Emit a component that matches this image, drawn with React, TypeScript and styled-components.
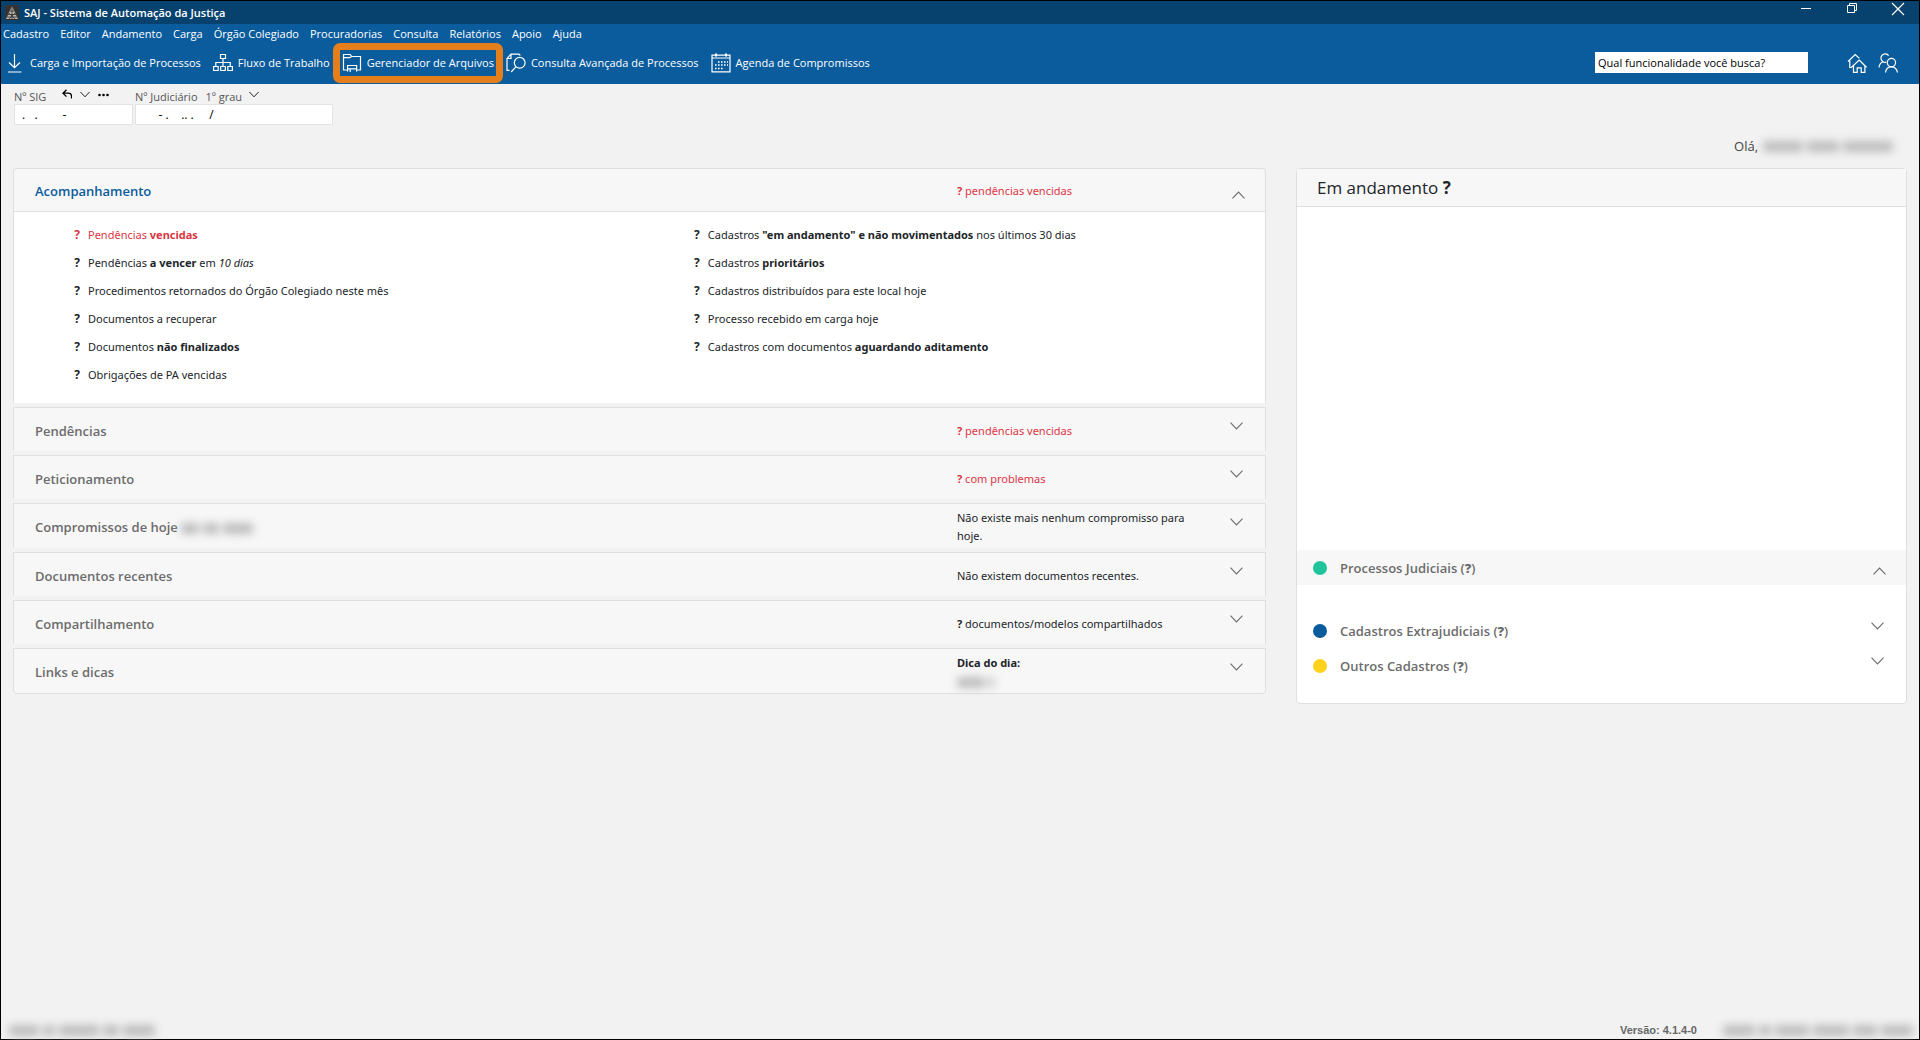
import React from 'react';
import styled, { createGlobalStyle, css } from 'styled-components';

const GlobalStyle = createGlobalStyle`
  *, *::before, *::after { box-sizing: border-box; }
  body { margin: 0; background: #f2f2f2; }
  button, input, select { font: inherit; color: inherit; }
  button { background: none; border: 0; padding: 0; cursor: pointer; text-align: left; }
  h1, h2, ul, p { margin: 0; padding: 0; }
  ul { list-style: none; }
`;

const Window = styled.div`
  display: flex;
  flex-direction: column;
  min-height: 100vh;
  border: 1px solid #000;
  background: #f2f2f2;
  color: #212529;
  font: 12px/18px 'Open Sans', 'Noto Sans', sans-serif;
`;

const TitleBar = styled.header`
  display: flex;
  align-items: center;
  justify-content: space-between;
  height: 23px;
  padding: 0 14px 0 4px;
  background: #07426f;
  color: #fff;
`;

const Brand = styled.div`
  display: flex;
  align-items: center;
  gap: 5px;
`;

const AppTitle = styled.h1`
  font-size: 11px;
  font-weight: 600;
  line-height: 18px;
`;

const WindowControls = styled.div`
  display: flex;
  gap: 32px;
  align-self: flex-start;
`;

const WindowButton = styled.button`
  display: flex;
  width: 14px;
  height: 16px;
  margin-top: 1px;
`;

const Ribbon = styled.div`
  background: #0a5c9d;
  color: #fff;
`;

const MenuBar = styled.nav`
  display: flex;
  gap: 11px;
  height: 20px;
  padding-left: 2px;
`;

const MenuItem = styled.button`
  font-size: 11px;
  line-height: 20px;
  white-space: nowrap;
`;

const ToolBar = styled.div`
  display: flex;
  align-items: center;
  justify-content: space-between;
  height: 40px;
  padding: 0 21px 3px 4px;
`;

const ToolGroup = styled.div<{ $gap: number }>`
  display: flex;
  align-items: center;
  gap: ${(p) => p.$gap}px;
`;

const Tool = styled.button<{ $highlighted?: boolean }>`
  position: relative;
  display: flex;
  align-items: center;
  gap: 5px;
  font-size: 11px;
  line-height: 18px;
  white-space: nowrap;

  ${(p) =>
    p.$highlighted &&
    css`
      &::after {
        content: '';
        position: absolute;
        inset: -10px -9px;
        border: 7px solid #e47f1c;
        border-radius: 7px;
      }
    `}
`;

const IconButton = styled.button`
  display: flex;
`;

const SearchBox = styled.input`
  width: 213px;
  height: 21px;
  margin-right: 28px;
  padding: 0 3px;
  border: 0;
  background: #fff;
  color: #000;
  font-size: 11px;
  &::placeholder { color: #000; opacity: 1; }
`;

const Lookup = styled.form`
  display: flex;
  gap: 2px;
  padding: 4px 13px 0;
`;

const LookupField = styled.div<{ $width: number }>`
  width: ${(p) => p.$width}px;
`;

const LookupHead = styled.div`
  display: flex;
  align-items: center;
  gap: 8px;
  height: 16px;
  padding-top: 2px;
  color: #555;
  font-size: 11px;
  white-space: nowrap;
`;

const HeadActions = styled.span`
  display: flex;
  align-items: center;
  gap: 8px;
  padding: 0 0 6px 8px;
  color: #000;
`;

const Court = styled.span`
  display: flex;
  align-items: center;
  gap: 6px;
  svg { margin-bottom: 6px; }
`;

const CourtSelect = styled.select`
  appearance: none;
  padding: 0;
  border: 0;
  background: none;
`;

const LookupInput = styled.input`
  width: 100%;
  height: 21px;
  padding: 0 7px;
  border: 1px solid #e3e3e3;
  background: #fff;
  color: #000;
  font-size: 12px;
`;

const Greeting = styled.p`
  display: flex;
  align-items: center;
  justify-content: flex-end;
  gap: 5px;
  height: 20px;
  margin: 11px 26px 12px;
  color: #444;
  font-size: 13px;
`;

const Redacted = styled.span`
  display: inline-flex;
  gap: 4px;
  filter: blur(4px);
  vertical-align: middle;
`;

const Word = styled.i<{ $width: number }>`
  width: ${(p) => p.$width}px;
  height: 11px;
  border-radius: 3px;
  background: #bdbdbd;
`;

const Board = styled.main`
  display: grid;
  grid-template-columns: 1253fr 611fr;
  align-items: start;
  gap: 30px;
  padding: 0 12px;
`;

const Accordion = styled.div`
  display: flex;
  flex-direction: column;
  gap: 4px;
`;

const Section = styled.section`
  border: 1px solid #dfdfdf;
  border-bottom: 0;
  background: #f7f7f7;
  &:first-child { border-radius: 4px 4px 0 0; }
  &:last-child { border-bottom: 1px solid #dfdfdf; border-radius: 0 0 4px 4px; }
`;

const SectionHead = styled.div<{ $open?: boolean }>`
  display: flex;
  align-items: center;
  min-height: 43px;
  padding: 5px 19px 3px 21px;
  ${(p) => p.$open && 'border-bottom: 1px solid #e2dfe0;'}
`;

const SectionTitle = styled.h2<{ $active?: boolean }>`
  flex: 1;
  color: ${(p) => (p.$active ? '#0a5c9d' : '#6c6c6c')};
  font-size: 13px;
  font-weight: 600;
  line-height: 20px;
`;

const Status = styled.div<{ $alert?: boolean }>`
  width: 274px;
  padding-right: 24px;
  color: ${(p) => (p.$alert ? '#dc3545' : '#212529')};
  font-family: 'Noto Sans', 'Open Sans', sans-serif;
  font-size: 11px;
`;

const Toggle = styled.button<{ $open?: boolean }>`
  display: flex;
  align-items: center;
  justify-content: center;
  align-self: ${(p) => (p.$open ? 'center' : 'flex-start')};
  width: 15px;
  height: 10px;
  margin: ${(p) => (p.$open ? '7px 0 0' : '8px 2px 0 -2px')};
  color: #6c6c6c;
`;

const SectionBody = styled.div`
  display: grid;
  grid-template-columns: 13fr 12fr;
  padding: 9px 0 14px 59px;
  background: #fff;
`;

const Indicator = styled.li<{ $alert?: boolean }>`
  display: flex;
  gap: 7px;
  color: ${(p) => (p.$alert ? '#dc3545' : '#212529')};
  font-family: 'Noto Sans', 'Open Sans', sans-serif;
  font-size: 11px;
  line-height: 28px;
`;

const Unknown = styled.b`
  width: 8px;
  font-size: 12px;
  font-weight: 700;
  text-align: center;
`;

const Card = styled.section`
  border: 1px solid #dfdfdf;
  border-radius: 4px;
  background: #fff;
`;

const CardTitle = styled.h2`
  padding: 0 20px;
  border-bottom: 1px solid #dfdfdf;
  background: #f7f7f7;
  font-size: 17px;
  font-weight: 400;
  line-height: 37px;
`;

const ChartArea = styled.div`
  height: 343px;
`;

const LegendRow = styled.div<{ $open?: boolean }>`
  display: flex;
  align-items: center;
  gap: 13px;
  height: 35px;
  margin-bottom: ${(p) => (p.$open ? '28px' : '0')};
  padding: 0 19px 0 16px;
  background: ${(p) => (p.$open ? '#f7f7f7' : 'transparent')};
`;

const Dot = styled.span<{ $color: string }>`
  width: 14px;
  height: 14px;
  border-radius: 50%;
  background: ${(p) => p.$color};
`;

const Legend = styled.div`
  padding-bottom: 20px;
`;

const StatusBar = styled.footer`
  display: flex;
  align-items: center;
  justify-content: space-between;
  height: 18px;
  margin-top: auto;
  padding: 0 6px 0 8px;
`;

const Release = styled.div`
  display: flex;
  align-items: center;
  gap: 26px;
  color: #666;
  font: bold 11px/16px 'Liberation Sans', Arial, sans-serif;
`;

const Chevron = ({ up, width = 13, color = 'currentColor' }: { up?: boolean; width?: number; color?: string }) => (
  <svg width={width} height={width === 13 ? 8 : 7} viewBox="0 0 13 8" fill="none" stroke={color} strokeWidth="1.1">
    <path d={up ? 'M.5 7.3 6.5 1l6 6.3' : 'M.5.7 6.5 7l6-6.3'} />
  </svg>
);

const Glyph = ({ children, size = 20 }: { children: React.ReactNode; size?: number }) => (
  <svg width={size} height={size} viewBox="0 0 20 20" fill="none" stroke="#fff" strokeWidth="1.2">
    {children}
  </svg>
);

const LogoMark = () => (
  <svg width="14" height="15" viewBox="0 0 14 15">
    <rect width="14" height="15" fill="#333" />
    <path d="M7 1 13 14H1Z" fill="#b9b4ae" />
    <path d="M7 1v13M4 8l6 6M10 8l-6 6M3 9.500h8M5 6h4M2 12h10" stroke="#333" strokeWidth=".8" />
  </svg>
);

const DownloadIcon = () => (
  <Glyph>
    <path d="M9.500 1v13.500M4 9.500l5.500 5.200L15 9.500M3 19h13.500" />
  </Glyph>
);

const FlowIcon = () => (
  <Glyph>
    <path d="M7.500 1.500h5v4h-5zM.600 13.500h4.600v4H.600zM7.700 13.500h4.600v4H7.700zM14.800 13.500h4.600v4h-4.600zM10 5.500v8M2.800 13.500v-4h14.400v4" />
  </Glyph>
);

const FolderIcon = () => (
  <Glyph>
    <path d="M5.500 17H1.500V1.500h6.800l1.400 2h8.800V17h-3.500M1.500 4.600h6.200l2-1.100" />
    <path d="M5.600 18.500v-6h9v6M5.600 15.800h9M8.200 19v-3.200" />
  </Glyph>
);

const AdvancedSearchIcon = () => (
  <Glyph>
    <path d="M3.500 17.400H1V5.500L5 1.200h7.500c1 0 1.500.6 1.500 1.600M1 5.500h4V1.200" />
    <circle cx="13.700" cy="9.800" r="5.400" />
    <path d="M9.800 13.800 5.200 19" />
  </Glyph>
);

const CalendarIcon = () => (
  <Glyph>
    <path d="M1 2.200h18v16.600H1zM1 5h18" />
    <path d="M5 .5v3M15 .5v3" strokeWidth="2" />
    <path d="M7 9h10M4 12h13M4 15.500h9" strokeWidth="1.600" strokeDasharray="1.600 1.400" />
  </Glyph>
);

const HomeIcon = () => (
  <Glyph>
    <path d="M1 8.500 8.200 1.600l4.200 3.800M2.800 7.500v7h2" />
    <path d="M4.500 14.200 12.200 7l7.300 7.200M6.500 12.800v6.600h3.700v-4.600h4v4.600h3.700v-6.600" />
  </Glyph>
);

const PeopleIcon = () => (
  <Glyph>
    <path d="M1 14.500c.3-3 1.500-4.800 4-5.800a4.200 4.200 0 1 1 5.600-6M5 8.700c1 .6 2 .7 3.200.5" />
    <circle cx="13.400" cy="9.600" r="4.200" />
    <path d="M7.500 19.500c.4-3.300 2.200-5.700 5.900-5.700s5.500 2.400 6.100 5.700" />
  </Glyph>
);

const menus = ['Cadastro', 'Editor', 'Andamento', 'Carga', 'Órgão Colegiado', 'Procuradorias', 'Consulta', 'Relatórios', 'Apoio', 'Ajuda'];

const tools = [
  { label: 'Carga e Importação de Processos', icon: <DownloadIcon /> },
  { label: 'Fluxo de Trabalho', icon: <FlowIcon /> },
  { label: 'Gerenciador de Arquivos', icon: <FolderIcon />, highlighted: true },
  { label: 'Consulta Avançada de Processos', icon: <AdvancedSearchIcon /> },
  { label: 'Agenda de Compromissos', icon: <CalendarIcon /> },
];

const leftIndicators = [
  { text: <>Pendências <b>vencidas</b></>, alert: true },
  { text: <>Pendências <b>a vencer</b> em <i>10 dias</i></> },
  { text: <>Procedimentos retornados do Órgão Colegiado neste mês</> },
  { text: <>Documentos a recuperar</> },
  { text: <>Documentos <b>não finalizados</b></> },
  { text: <>Obrigações de PA vencidas</> },
];

const rightIndicators = [
  { text: <>Cadastros <b>"em andamento" e não movimentados</b> nos últimos 30 dias</> },
  { text: <>Cadastros <b>prioritários</b></> },
  { text: <>Cadastros distribuídos para este local hoje</> },
  { text: <>Processo recebido em carga hoje</> },
  { text: <>Cadastros com documentos <b>aguardando aditamento</b></> },
];

const sections = [
  { title: 'Pendências', status: <><b>?</b> pendências vencidas</>, alert: true },
  { title: 'Peticionamento', status: <><b>?</b> com problemas</>, alert: true },
  { title: 'Compromissos de hoje', hidden: [18, 16, 30], status: <>Não existe mais nenhum compromisso para hoje.</> },
  { title: 'Documentos recentes', status: <>Não existem documentos recentes.</> },
  { title: 'Compartilhamento', status: <><b>?</b> documentos/modelos compartilhados</> },
  { title: 'Links e dicas', status: <><b>Dica do dia:</b><br /><Hidden words={[28, 5]} /></> },
];

const legend = [
  { title: 'Processos Judiciais', color: '#20c49b', open: true },
  { title: 'Cadastros Extrajudiciais', color: '#0a5c9d' },
  { title: 'Outros Cadastros', color: '#ffd21c' },
];

function Hidden({ words }: { words: number[] }) {
  return (
    <Redacted aria-hidden="true">
      {words.map((w, i) => <Word key={i} $width={w} />)}
    </Redacted>
  );
}

const IndicatorList = ({ items }: { items: { text: React.ReactNode; alert?: boolean }[] }) => (
  <ul>
    {items.map((item, i) => (
      <Indicator key={i} $alert={item.alert}>
        <Unknown>?</Unknown>
        <span>{item.text}</span>
      </Indicator>
    ))}
  </ul>
);

export default function App() {
  return (
    <>
      <GlobalStyle />
      <Window>
        <TitleBar>
          <Brand>
            <LogoMark />
            <AppTitle>SAJ - Sistema de Automação da Justiça</AppTitle>
          </Brand>
          <WindowControls>
            <WindowButton aria-label="Minimizar">
              <svg width="14" height="16" stroke="#fff"><path d="M2 6.500h10" /></svg>
            </WindowButton>
            <WindowButton aria-label="Restaurar">
              <svg width="14" height="16" fill="none" stroke="#fff"><path d="M2.500 3.500h7v7h-7zM4.500 3.500v-2h7v7h-2" /></svg>
            </WindowButton>
            <WindowButton aria-label="Fechar">
              <svg width="14" height="16" stroke="#fff" strokeWidth="1.200"><path d="m1 1 12 12M13 1 1 13" /></svg>
            </WindowButton>
          </WindowControls>
        </TitleBar>

        <Ribbon>
          <MenuBar>
            {menus.map((m) => <MenuItem key={m}>{m}</MenuItem>)}
          </MenuBar>
          <ToolBar>
            <ToolGroup $gap={12}>
              {tools.map((t) => (
                <Tool key={t.label} $highlighted={t.highlighted}>
                  {t.icon}
                  {t.label}
                </Tool>
              ))}
            </ToolGroup>
            <ToolGroup $gap={11}>
              <SearchBox type="search" aria-label="Buscar funcionalidade" placeholder="Qual funcionalidade você busca?" />
              <IconButton aria-label="Início"><HomeIcon /></IconButton>
              <IconButton aria-label="Usuários"><PeopleIcon /></IconButton>
            </ToolGroup>
          </ToolBar>
        </Ribbon>

        <Lookup>
          <LookupField $width={119}>
            <LookupHead>
              <label htmlFor="sig">Nº SIG</label>
              <HeadActions>
                <svg width="10" height="10" viewBox="0 0 10 10" fill="none" stroke="#000" strokeWidth="1.300">
                  <path d="M4.500.8 1 4.200l3.500 3.400M1 4.200h5.500c2 0 3 1.200 3 3V9.500" />
                </svg>
                <Chevron width={10} color="#000" />
                <svg width="11" height="10" fill="#000">
                  <circle cx="1.500" cy="6" r="1.300" /><circle cx="5.500" cy="6" r="1.300" /><circle cx="9.500" cy="6" r="1.300" />
                </svg>
              </HeadActions>
            </LookupHead>
            <LookupInput id="sig" defaultValue=".   .        -" />
          </LookupField>
          <LookupField $width={198}>
            <LookupHead>
              <label htmlFor="judiciario">Nº Judiciário</label>
              <Court>
                <CourtSelect aria-label="Grau"><option>1º grau</option></CourtSelect>
                <Chevron width={10} color="#000" />
              </Court>
            </LookupHead>
            <LookupInput id="judiciario" defaultValue="     - .    .. .     /" />
          </LookupField>
        </Lookup>

        <Greeting>Olá, <Hidden words={[40, 32, 50]} /></Greeting>

        <Board>
          <Accordion>
            <Section>
              <SectionHead $open>
                <SectionTitle $active>Acompanhamento</SectionTitle>
                <Status $alert><b>?</b> pendências vencidas</Status>
                <Toggle $open aria-label="Recolher Acompanhamento"><Chevron up /></Toggle>
              </SectionHead>
              <SectionBody>
                <IndicatorList items={leftIndicators} />
                <IndicatorList items={rightIndicators} />
              </SectionBody>
            </Section>
            {sections.map((s) => (
              <Section key={s.title}>
                <SectionHead>
                  <SectionTitle>{s.title} {s.hidden && <Hidden words={s.hidden} />}</SectionTitle>
                  <Status $alert={s.alert}>{s.status}</Status>
                  <Toggle aria-label={`Expandir ${s.title}`}><Chevron /></Toggle>
                </SectionHead>
              </Section>
            ))}
          </Accordion>

          <Card>
            <CardTitle>Em andamento <b>?</b></CardTitle>
            <ChartArea />
            <Legend>
              {legend.map((l) => (
                <LegendRow key={l.title} $open={l.open}>
                  <Dot $color={l.color} />
                  <SectionTitle>{l.title} (<b>?</b>)</SectionTitle>
                  <Toggle $open={l.open} aria-label={l.title}><Chevron up={l.open} /></Toggle>
                </LegendRow>
              ))}
            </Legend>
          </Card>
        </Board>

        <StatusBar>
          <Hidden words={[30, 12, 40, 16, 32]} />
          <Release>
            Versão: 4.1.4-0
            <Hidden words={[32, 12, 34, 36, 24, 32]} />
          </Release>
        </StatusBar>
      </Window>
    </>
  );
}
